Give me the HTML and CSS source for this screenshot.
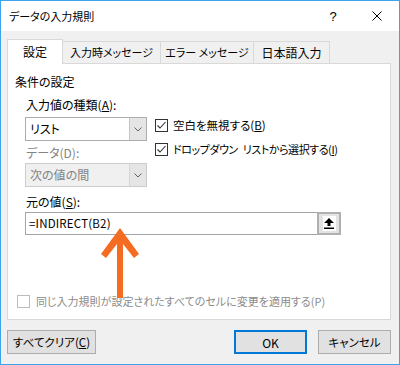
FILE: index.html
```html
<!DOCTYPE html>
<html lang="ja">
<head>
    <meta charset="UTF-8">
    <title>データの入力規則</title>
    <link rel="stylesheet" href="styles.css">
</head>
<body>
    <div class="dialog">
        <div class="titlebar">
            <span class="title">データの入力規則</span>
            <span class="help">?</span>
            <span class="close">
                <svg width="10" height="10" viewBox="0 0 10 10"><path d="M0.5 0.5 L9.5 9.5 M9.5 0.5 L0.5 9.5" stroke="#000" stroke-width="1" fill="none"/></svg>
            </span>
        </div>

        <div class="content">
            <div class="tabs">
                <div class="tab active">設定</div>
                <div class="tab tab-msg">入力時メッセージ</div>
                <div class="tab tab-err">エラー メッセージ</div>
                <div class="tab tab-ime">日本語入力</div>
            </div>

            <div class="panel">
                <div class="group-title">条件の設定</div>
                <div class="label first">入力値の種類(<u>A</u>):</div>

                <div class="cond">
                    <div class="cond-left">
                        <div class="combo">
                            <span class="combo-text">リスト</span>
                            <span class="combo-btn">
                                <svg width="8" height="5" viewBox="0 0 8 5"><path d="M0.5 0.5 L4 4 L7.5 0.5" stroke="#606060" fill="none"/></svg>
                            </span>
                        </div>
                        <div class="label disabled">データ(D):</div>
                        <div class="combo disabled">
                            <span class="combo-text">次の値の間</span>
                            <span class="combo-btn">
                                <svg width="8" height="5" viewBox="0 0 8 5"><path d="M0.5 0.5 L4 4 L7.5 0.5" stroke="#606060" fill="none"/></svg>
                            </span>
                        </div>
                    </div>
                    <div class="cond-right">
                        <div class="check">
                            <span class="box"><svg width="11" height="11" viewBox="0 0 11 11"><path d="M1.5 5.5 L4 8 L9.5 2" stroke="#333" stroke-width="1.1" fill="none"/></svg></span>
                            <span>空白を無視する(<u>B</u>)</span>
                        </div>
                        <div class="check narrow">
                            <span class="box"><svg width="11" height="11" viewBox="0 0 11 11"><path d="M1.5 5.5 L4 8 L9.5 2" stroke="#333" stroke-width="1.1" fill="none"/></svg></span>
                            <span>ドロップダウン リストから選択する(<u>I</u>)</span>
                        </div>
                    </div>
                </div>

                <div class="label source-label">元の値(<u>S</u>):</div>
                <div class="source">
                    <span class="source-text">=INDIRECT(B2)</span>
                    <span class="ref-btn">
                        <span class="ref-icon">
                            <svg width="10" height="11" viewBox="0 0 10 11"><path d="M5 0 L10 5 L6.5 5 L6.5 8 L3.5 8 L3.5 5 L0 5 Z" fill="#000"/><rect x="0" y="9.5" width="10" height="1.5" fill="#000"/></svg>
                        </span>
                    </span>
                </div>

                <div class="check apply disabled">
                    <span class="box"></span>
                    <span>同じ入力規則が設定されたすべてのセルに変更を適用する(P)</span>
                </div>

                <!-- callout arrow pointing at the formula -->
                <svg class="callout" width="40" height="74" viewBox="0 0 40 74">
                    <polygon points="20,2 39,28 34,32 23,18 23,72 17,72 17,18 6,32 1,28" fill="#f36c21"/>
                </svg>
            </div>

            <div class="footer">
                <button class="btn btn-clear">すべてクリア(<u>C</u>)</button>
                <div class="footer-right">
                    <button class="btn btn-ok">OK</button>
                    <button class="btn">キャンセル</button>
                </div>
            </div>
        </div>
    </div>
</body>
</html>
```

FILE: styles.css
```css
* {
    margin: 0;
    padding: 0;
    box-sizing: border-box;
}

body {
    width: 400px;
    height: 365px;
    font-family: "Noto Sans CJK JP", "Noto Sans", sans-serif;
    font-size: 11px;
    font-feature-settings: "palt";
    color: #000;
    overflow: hidden;
}

.dialog {
    width: 400px;
    height: 365px;
    border: 1px solid #3ca3ec;
    background: #f0f0f0;
}

.titlebar {
    height: 30px;
    background: #fff;
    display: flex;
    align-items: center;
}

.title {
    flex: 1;
    padding-left: 8px;
    line-height: 30px;
}

.help,
.close {
    width: 44px;
    height: 30px;
    display: flex;
    align-items: center;
    justify-content: center;
}

.help {
    font-family: "Liberation Sans", sans-serif;
    font-size: 13px;
}

.content {
    padding: 8px 0 0 6px;
}

/* tabs */
.tabs {
    display: flex;
    align-items: flex-end;
    margin-bottom: -1px;
    position: relative;
    z-index: 1;
}

.tab {
    height: 23px;
    border: 1px solid #d9d9d9;
    background: #f0f0f0;
    margin-left: -1px;
    display: flex;
    align-items: center;
    justify-content: center;
    padding-bottom: 1px;
    white-space: nowrap;
}

.tab.active {
    width: 56px;
    height: 25px;
    margin-left: 0;
    background: #fff;
    border-bottom: none;
    position: relative;
    z-index: 1;
    padding-bottom: 2px;
    font-size: 12px;
}

.tab-msg { width: 99px; }
.tab-err { width: 94px; }
.tab-ime { width: 77px; font-size: 12px; }

/* panel */
.panel {
    position: relative;
    width: 384px;
    height: 257px;
    background: #fff;
    border: 1px solid #d9d9d9;
    padding: 10px 0 10px 7px;
    display: flex;
    flex-direction: column;
}

.group-title {
    line-height: 16px;
    font-size: 12px;
}

.label {
    line-height: 16px;
    margin-left: 11px;
    font-size: 12px;
}

.label.first { margin-top: 7px; }
.label.disabled { color: #838383; margin-left: 1px; margin-top: 4px; }
.label.source-label { margin-top: 7px; }

u {
    text-underline-offset: 1px;
}

.cond {
    display: flex;
    margin-top: 4px;
    margin-left: 10px;
}

.cond-left {
    width: 122px;
}

.combo {
    height: 24px;
    border: 1px solid #adadad;
    display: flex;
}

.combo-text {
    flex: 1;
    line-height: 22px;
    padding-left: 4px;
    font-size: 12px;
}

.combo-btn {
    width: 17px;
    background: #e5e5e5;
    border-left: 1px solid #c4c4c4;
    display: flex;
    align-items: center;
    justify-content: center;
}

.combo.disabled {
    margin-top: 2px;
    border-color: #cccccc;
    background: #f0f0f0;
    color: #838383;
}

.combo.disabled .combo-btn {
    border-left-color: #d6d6d6;
}

.cond-right {
    margin-left: 8px;
}

.check {
    display: flex;
    align-items: center;
    height: 16px;
    margin-bottom: 8px;
    white-space: nowrap;
    font-size: 11.5px;
}

.check.narrow span + span {
    font-size: 11px;
    letter-spacing: -0.45px;
    word-spacing: 3px;
}

.box {
    width: 13px;
    height: 13px;
    border: 1px solid #333;
    background: #fff;
    margin-right: 5px;
    display: flex;
    align-items: center;
    justify-content: center;
}

.source {
    margin-top: 2px;
    margin-left: 10px;
    width: 316px;
    height: 23px;
    border: 1px solid #a5a5a5;
    display: flex;
}

.source-text {
    flex: 1;
    line-height: 21px;
    padding-left: 3px;
    font-size: 11.5px;
    letter-spacing: 0.2px;
}

.ref-btn {
    width: 24px;
    height: 23px;
    margin: -1px -1px -1px 0;
    border: 2px solid #b0b0b0;
    background: #e3e3e3;
    display: flex;
    align-items: center;
    justify-content: center;
}

.ref-icon {
    width: 13px;
    height: 15px;
    background: #fff;
    display: flex;
    align-items: center;
    justify-content: center;
}

.check.apply {
    margin-top: auto;
    margin-bottom: 0;
    margin-left: 2px;
    color: #8c8c8c;
    font-size: 11px;
}

.check.apply .box {
    border-color: #bcbcbc;
    margin-right: 6px;
}

.callout {
    position: absolute;
    left: 92px;
    top: 162px;
}

/* buttons */
.footer {
    width: 384px;
    margin-top: 10px;
    display: flex;
    justify-content: space-between;
}

.footer-right {
    display: flex;
    gap: 11px;
}

.btn {
    height: 24px;
    width: 73px;
    border: 1px solid #adadad;
    background: #e1e1e1;
    font: inherit;
    font-size: 11.5px;
    color: #000;
}

.btn-clear {
    width: 89px;
}

.btn-ok {
    border: 2px solid #0078d7;
    font-size: 12px;
}
```
